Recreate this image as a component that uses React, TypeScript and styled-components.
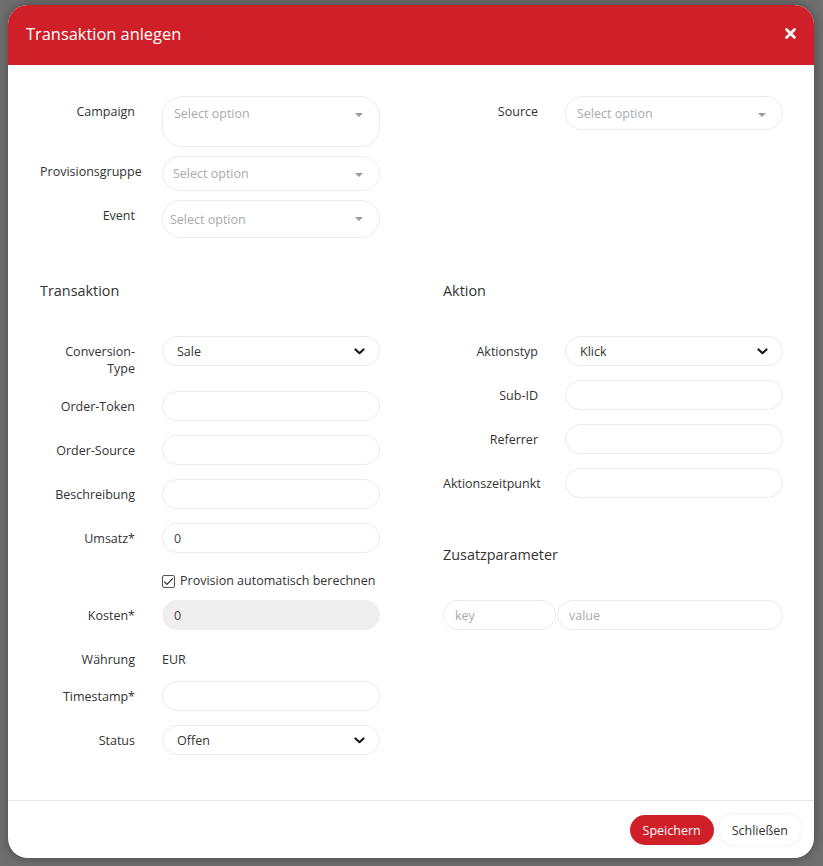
import React from "react";
import styled, { createGlobalStyle } from "styled-components";

const GlobalStyle = createGlobalStyle`
  html, body {
    margin: 0;
    padding: 0;
    background: #6f6f6f;
    font-family: "Open Sans", "Noto Sans", sans-serif;
    color: #333;
  }
  * { box-sizing: border-box; }
`;

const Overlay = styled.div`
  min-height: 866px;
  padding: 5px 9px 0 8px;
`;

const Modal = styled.div`
  width: 806px;
  background: #fff;
  border-radius: 20px;
  overflow: hidden;
  box-shadow: 0 0 12px rgba(0, 0, 0, 0.35);
`;

const Header = styled.div`
  height: 60px;
  background: #cf2029;
  display: flex;
  align-items: center;
  justify-content: space-between;
  padding: 0 14px 4px 18px;
`;

const Title = styled.h1`
  margin: 0;
  font-size: 16.4px;
  font-weight: 400;
  color: #fff;
`;

const CloseButton = styled.button`
  border: 0;
  background: transparent;
  padding: 4px;
  display: flex;
  cursor: pointer;
`;

const Body = styled.div`
  padding: 31px 31px 45px 32px;
`;

const Columns = styled.div`
  display: grid;
  grid-template-columns: 340px 340px;
  column-gap: 63px;
`;

const Column = styled.div`
  display: flex;
  flex-direction: column;
`;

const SectionColumns = styled(Columns)`
  margin-top: 43px;
`;

const SectionTitle = styled.h2<{ $top?: number }>`
  margin: ${(p) => p.$top ?? 0}px 0 35px 0;
  font-size: 14.4px;
  line-height: 20px;
  font-weight: 400;
  color: #333;
`;

const Row = styled.div<{ $gap?: number }>`
  display: flex;
  align-items: flex-start;
  gap: 27px;
  margin-bottom: ${(p) => p.$gap ?? 14}px;
  &:last-child { margin-bottom: 0; }
`;

const Label = styled.label`
  width: 95px;
  flex: 0 0 95px;
  text-align: right;
  font-size: 12.5px;
  line-height: 17px;
  padding-top: 7px;
  color: #333;
`;

const Field = styled.div`
  flex: 1;
  min-width: 0;
`;

const Input = styled.input<{ $disabled?: boolean }>`
  width: 100%;
  height: 30px;
  border: 1px solid ${(p) => (p.$disabled ? "#efefef" : "#ebebeb")};
  background: ${(p) => (p.$disabled ? "#efefef" : "#fff")};
  border-radius: 15px;
  padding: 0 11px;
  font-family: "Open Sans", sans-serif;
  font-size: 12.5px;
  color: #444;
  outline: none;
  &::placeholder { color: #aaa; }
`;

const SelectBox = styled.div<{ $h: number; $pad: number; $top: number }>`
  position: relative;
  height: ${(p) => p.$h}px;
  border: 1px solid #ebebeb;
  border-radius: ${(p) => Math.min(p.$h / 2, 20)}px;
  padding: ${(p) => p.$top}px 30px 0 ${(p) => p.$pad}px;
  font-size: 12.5px;
  line-height: 18px;
  color: #aaa;
`;

const Caret = styled.span`
  position: absolute;
  right: 16px;
  top: 16px;
  width: 0;
  height: 0;
  border-left: 4px solid transparent;
  border-right: 4px solid transparent;
  border-top: 4px solid #999;
`;

const NativeSelect = styled.div`
  height: 30px;
  border: 1px solid #ebebeb;
  border-radius: 15px;
  display: flex;
  align-items: center;
  justify-content: space-between;
  padding: 0 14px 0 14px;
  font-size: 12.5px;
  color: #333;
`;

const StaticValue = styled.div`
  font-size: 12.5px;
  line-height: 17px;
  padding-top: 7px;
  color: #333;
`;

const CheckRow = styled.label`
  display: flex;
  align-items: center;
  gap: 5px;
  margin: 0 0 10px 122px;
  padding-top: 5px;
  font-size: 12.5px;
  line-height: 18px;
  white-space: nowrap;
  color: #333;
`;

const CheckBox = styled.span`
  width: 13px;
  height: 13px;
  flex: 0 0 13px;
  border: 1px solid #555;
  border-radius: 2px;
  display: flex;
  align-items: center;
  justify-content: center;
  background: #fff;
`;

const ParamRow = styled.div`
  display: grid;
  grid-template-columns: 113px 1fr;
  gap: 1px;
`;

const Footer = styled.div`
  border-top: 1px solid #e6e6e6;
  display: flex;
  justify-content: flex-end;
  gap: 5px;
  padding: 14px 13px 13px 0;
`;

const Button = styled.button<{ $primary?: boolean }>`
  height: 30px;
  border-radius: 15px;
  border: 0;
  padding: 0 13px;
  font-family: "Open Sans", sans-serif;
  font-size: 12.5px;
  cursor: pointer;
  background: ${(p) => (p.$primary ? "#cf2029" : "#fff")};
  color: ${(p) => (p.$primary ? "#fff" : "#333")};
  box-shadow: ${(p) => (p.$primary ? "none" : "0 0 6px rgba(0,0,0,0.08)")};
`;

const Chevron = () => (
  <svg width="11" height="7" viewBox="0 0 11 7">
    <path d="M1.5 1.5 L5.5 5.2 L9.5 1.5" fill="none" stroke="#1a1a1a" strokeWidth="2.2" strokeLinecap="round" strokeLinejoin="round" />
  </svg>
);

const Select2 = ({ h, pad, top }: { h: number; pad: number; top: number }) => (
  <SelectBox $h={h} $pad={pad} $top={top}>
    Select option
    <Caret />
  </SelectBox>
);

const Dropdown = ({ value }: { value: string }) => (
  <NativeSelect>
    {value}
    <Chevron />
  </NativeSelect>
);

const TextRow = ({ label, value, disabled, placeholder }: { label: string; value?: string; disabled?: boolean; placeholder?: string }) => (
  <Row>
    <Label>{label}</Label>
    <Field>
      <Input defaultValue={value} $disabled={disabled} readOnly={disabled} placeholder={placeholder} />
    </Field>
  </Row>
);

export default function App() {
  return (
    <>
      <GlobalStyle />
      <Overlay>
        <Modal>
          <Header>
            <Title>Transaktion anlegen</Title>
            <CloseButton aria-label="close">
              <svg width="11" height="11" viewBox="0 0 11 11">
                <path d="M1.5 1.5 L9.5 9.5 M9.5 1.5 L1.5 9.5" stroke="#fff" strokeWidth="2.6" strokeLinecap="round" />
              </svg>
            </CloseButton>
          </Header>
          <Body>
            <Columns>
              <Column>
                <Row $gap={9}>
                  <Label>Campaign</Label>
                  <Field><Select2 h={51} pad={11} top={8} /></Field>
                </Row>
                <Row $gap={9}>
                  <Label>Provisionsgruppe</Label>
                  <Field><Select2 h={35} pad={10} top={8} /></Field>
                </Row>
                <Row>
                  <Label>Event</Label>
                  <Field><Select2 h={38} pad={7} top={10} /></Field>
                </Row>
              </Column>
              <Column>
                <Row>
                  <Label>Source</Label>
                  <Field><Select2 h={34} pad={11} top={8} /></Field>
                </Row>
              </Column>
            </Columns>

            <SectionColumns>
              <Column>
                <SectionTitle>Transaktion</SectionTitle>
                <Row>
                  <Label>Conversion-Type</Label>
                  <Field><Dropdown value="Sale" /></Field>
                </Row>
                <TextRow label="Order-Token" />
                <TextRow label="Order-Source" />
                <TextRow label="Beschreibung" />
                <TextRow label="Umsatz*" value="0" />
                <CheckRow>
                  <CheckBox>
                    <svg width="11" height="9" viewBox="0 0 11 9">
                      <path d="M1.2 4.6 L4 7.4 L9.8 1.4" fill="none" stroke="#333" strokeWidth="1.3" />
                    </svg>
                  </CheckBox>
                  Provision automatisch berechnen
                </CheckRow>
                <TextRow label="Kosten*" value="0" disabled />
                <Row $gap={13}>
                  <Label>Währung</Label>
                  <StaticValue>EUR</StaticValue>
                </Row>
                <TextRow label="Timestamp*" />
                <Row>
                  <Label>Status</Label>
                  <Field><Dropdown value="Offen" /></Field>
                </Row>
              </Column>
              <Column>
                <SectionTitle>Aktion</SectionTitle>
                <Row>
                  <Label>Aktionstyp</Label>
                  <Field><Dropdown value="Klick" /></Field>
                </Row>
                <TextRow label="Sub-ID" />
                <TextRow label="Referrer" />
                <Row $gap={0}>
                  <Label>Aktionszeitpunkt</Label>
                  <Field><Input /></Field>
                </Row>
                <SectionTitle $top={47}>Zusatzparameter</SectionTitle>
                <ParamRow>
                  <Input placeholder="key" />
                  <Input placeholder="value" />
                </ParamRow>
              </Column>
            </SectionColumns>
          </Body>
          <Footer>
            <Button $primary>Speichern</Button>
            <Button>Schließen</Button>
          </Footer>
        </Modal>
      </Overlay>
    </>
  );
}
